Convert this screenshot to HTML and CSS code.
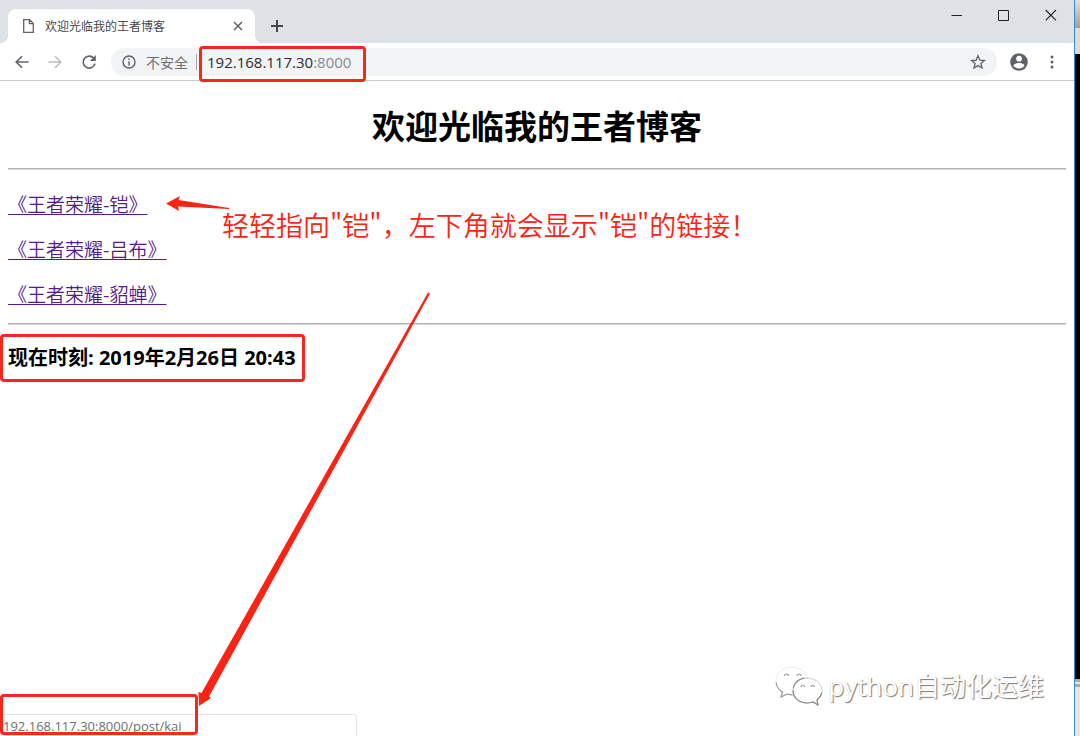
FILE: index.html
```html
<!DOCTYPE html>
<html lang="zh-CN">
<head>
<meta charset="utf-8">
<title>欢迎光临我的王者博客</title>
<link rel="stylesheet" href="styles.css">
</head>
<body>
<div class="desktop">
  <div class="window">
    <header class="tab-strip">
      <div class="tab">
        <svg class="tab-file" width="11" height="14" viewBox="0 0 11 14" fill="none" stroke="#5f6368" stroke-width="1.3"><path d="M.7.7H6.6L10.3 4.4V13.3H.7ZM6.4.9V4.7H10.2"/></svg>
        <span class="tab-title">欢迎光临我的王者博客</span>
        <button class="icon-button" aria-label="关闭标签页"><svg width="10" height="10" viewBox="0 0 10 10" stroke="#5f6368" stroke-width="1.5"><path d="M1 1L9 9M9 1L1 9"/></svg></button>
      </div>
      <button class="icon-button new-tab" aria-label="新标签页"><svg width="12" height="12" viewBox="0 0 12 12" stroke="#45484c" stroke-width="2"><path d="M6 0V12M0 6H12"/></svg></button>
      <div class="window-controls">
        <button class="icon-button" aria-label="最小化"><svg width="12" height="12" viewBox="0 0 12 12" stroke="#222" stroke-width="1"><path d="M.5 6.5H11"/></svg></button>
        <button class="icon-button" aria-label="最大化"><svg width="12" height="12" viewBox="0 0 12 12" fill="none" stroke="#222" stroke-width="1"><path d="M.5 1.5H10.5V11.5H.5Z"/></svg></button>
        <button class="icon-button" aria-label="关闭"><svg width="12" height="12" viewBox="0 0 12 12" stroke="#222" stroke-width="1.1"><path d="M.7 1L11 11.3M11 1L.7 11.3"/></svg></button>
      </div>
    </header>
    <nav class="toolbar">
      <div class="nav-buttons">
        <button class="icon-button" aria-label="后退"><svg width="14" height="14" viewBox="0 0 14 14" fill="none" stroke="#5f6368" stroke-width="1.6"><path d="M13.5 7H1.5M7 1.2L1.2 7L7 12.8"/></svg></button>
        <button class="icon-button" aria-label="前进" disabled><svg width="14" height="14" viewBox="0 0 14 14" fill="none" stroke="#babcbe" stroke-width="1.5"><path d="M.5 7H12.5M7 1.2L12.8 7L7 12.8"/></svg></button>
        <button class="icon-button" aria-label="重新加载"><svg width="16" height="16" viewBox="0 0 16 16"><path d="M12.8 4.2A6 6 0 1 0 14 9.6" fill="none" stroke="#5f6368" stroke-width="1.7"/><path d="M14.8 1V7H8.8Z" fill="#5f6368"/></svg></button>
      </div>
      <div class="address-bar">
        <svg width="14" height="14" viewBox="0 0 14 14" fill="none" stroke="#5f6368" stroke-width="1.4"><circle cx="7" cy="7" r="6"/><path d="M7 6.2V10.4M7 3.6V5"/></svg>
        <span class="security">不安全</span>
        <span class="divider"></span>
        <span class="url">192.168.117.30<span class="port">:8000</span></span>
        <button class="icon-button bookmark" aria-label="为此页添加书签"><svg width="16" height="16" viewBox="0 0 16 16" fill="none" stroke="#5f6368" stroke-width="1.3"><path d="M8 1.8L9.8 6.1L14.4 6.5L10.9 9.5L12 14L8 11.6L4 14L5.1 9.5L1.6 6.5L6.2 6.1Z"/></svg></button>
      </div>
      <button class="icon-button" aria-label="用户"><svg width="18" height="18" viewBox="0 0 18 18"><circle cx="9" cy="9" r="8.8" fill="#5f6368"/><circle cx="9" cy="5.7" r="2.9" fill="#fff"/><path d="M3.4 12.4C4.6 10.6 7 10 9 10S13.4 10.6 14.6 12.4C13.3 14.4 11.3 15.4 9 15.4S4.7 14.4 3.4 12.4Z" fill="#fff"/></svg></button>
      <button class="icon-button" aria-label="菜单"><svg width="4" height="14" viewBox="0 0 4 14" fill="#5f6368"><circle cx="2" cy="2" r="1.5"/><circle cx="2" cy="7" r="1.5"/><circle cx="2" cy="12" r="1.5"/></svg></button>
    </nav>
    <main class="page">
      <h1 class="page-title">欢迎光临我的王者博客</h1>
      <hr class="rule">
      <div class="posts">
        <a class="post-link" href="#kai">《王者荣耀-铠》</a>
        <a class="post-link" href="#lvbu">《王者荣耀-吕布》</a>
        <a class="post-link" href="#diaochan">《王者荣耀-貂蝉》</a>
      </div>
      <hr class="rule">
      <p class="clock">现在时刻: 2019年2月26日 20:43</p>
      <p class="note">轻轻指向"铠"，左下角就会显示"铠"的链接！</p>
      <svg class="arrow-short" width="64" height="18" viewBox="0 0 64 18" fill="#fb2313"><path d="M0 8.5L14 1L12.5 5L63 13V14L12 11.5L13 16Z"/></svg>
      <div class="status">192.168.117.30:8000/post/kai</div>
      <svg class="arrow-long" width="234" height="416" viewBox="0 0 234 416" fill="#fb2313"><path d="M232 .5L234 1.5L13 404.5L15 406L3 414L2.5 400L5.500 401Z"/></svg>
      <div class="watermark">
        <svg width="48" height="40" viewBox="0 0 48 40" fill="#fff" stroke-linecap="round">
          <path d="M17 1C8 1 1 7 1 15C1 20 3.5 23.5 7.5 26L6 31L12 28C14 28.6 17 29 20 28.5L33 14C32 6 25 1 17 1Z" stroke="#ececec"/>
          <path d="M1.2 17C1.8 21 4 24 7.5 26L6 31L12 28L17 28.8" fill="none" stroke="#999" stroke-width="1.2"/>
          <path d="M32 12C24 12 18 17.5 18 24.5S24 37 32 37C34 37 36 36.6 38 36L43 39L42 34C45 32 47 28.5 47 24.5C47 17.5 40 12 32 12Z" stroke="#ccc"/>
          <path d="M18 24.5C18 31.5 24 37 32 37C34 37 36 36.6 38 36L43 39L42 34C44 32.5 46 30 46.7 27M18.3 22C19 17 23.5 13 29 12.2" fill="none" stroke="#888" stroke-width="1.2"/>
          <path d="M9.5 9.5C10 7.5 13 7.5 13.5 9.5M22 9.5C22.5 7.5 25.5 7.5 26 9.5M26 20.5C26.5 18.8 29 18.8 29.5 20.5M36 20.5C36.5 18.8 39 18.8 39.5 20.5" fill="none" stroke="#999" stroke-width="1.2"/>
        </svg>
        <span>python自动化运维</span>
      </div>
    </main>
  </div>
  <aside class="behind"><div class="behind-top"></div><div class="behind-panel"></div><div class="behind-dark"></div><div class="behind-foot"></div></aside>
</div>
</body>
</html>
```
FILE: styles.css
```css
*, *::before, *::after { box-sizing: border-box; }
body {
  margin: 0;
  font-family: "Open Sans", "Noto Sans CJK SC", sans-serif;
  color: #000;
  background: #fff;
}
.desktop { display: flex; min-height: 100vh; overflow: hidden; }
.window { flex: 1; min-width: 0; display: flex; flex-direction: column; }

.icon-button {
  display: flex;
  align-items: center;
  justify-content: center;
  padding: 0;
  border: 0;
  background: none;
}

.tab-strip { display: flex; height: 43px; padding-left: 8px; background: #dee1e6; }
.tab {
  position: relative;
  display: flex;
  align-items: center;
  width: 247px;
  margin-top: 9px;
  padding: 0 12px 0 15px;
  border-radius: 8px 8px 0 0;
  background: #fff;
}
.tab::before, .tab::after {
  content: "";
  position: absolute;
  bottom: 0;
  width: 8px;
  height: 8px;
}
.tab::before { right: 100%; background: radial-gradient(circle at 0 0, transparent 8px, #fff 8px); }
.tab::after { left: 100%; background: radial-gradient(circle at 100% 0, transparent 8px, #fff 8px); }
.tab-title { flex: 1; margin-left: 11px; font-size: 12px; color: #45484c; }
.new-tab { width: 44px; margin-top: 8px; }
.window-controls { display: flex; height: 30px; margin-left: auto; }
.window-controls .icon-button { width: 47px; }

.toolbar {
  display: flex;
  align-items: center;
  gap: 22px;
  height: 38px;
  padding: 0 20px 0 15px;
  border-bottom: 1px solid #c9cbcd;
  background: #fff;
}
.nav-buttons { display: flex; gap: 19px; }
.address-bar {
  flex: 1;
  display: flex;
  align-items: center;
  height: 28px;
  margin: 0 -9px 0 -8px;
  padding: 0 11px;
  border-radius: 14px;
  background: #f1f3f4;
}
.security { margin-left: 10px; font-size: 14px; color: #6b6f73; }
.divider { width: 1px; height: 16px; margin: 0 10px 0 8px; background: #a5a8ab; }
.url { position: relative; font-size: 15px; color: #2b2d30; }
.port { color: #888b8f; }
.bookmark { margin-left: auto; }

.url::after, .clock::after, .status::after {
  content: "";
  position: absolute;
  border: 3px solid #f6281c;
  border-radius: 4px;
}
.url::after { inset: -6px -15px -10px -8px; }

.page { position: relative; flex: 1; padding: 24px 8px; }
.page-title { margin: 0 0 19px; font-size: 33px; line-height: 44px; text-align: center; }
.rule { margin: 0; border: 0; border-top: 1px solid #b0b0b0; border-bottom: 1px solid #d8d8d8; }
.posts { display: flex; flex-direction: column; align-items: flex-start; gap: 20px; padding: 21px 0 17px; }
.post-link {
  font-family: "Noto Sans CJK SC", sans-serif;
  font-size: 19px;
  font-weight: 350;
  line-height: 25px;
  color: #551a8b;
  text-underline-offset: 2px;
}
.clock { position: relative; width: max-content; margin: 20px 0 0; font-size: 20px; font-weight: 700; line-height: 25px; }
.clock::after { inset: -11px -9px -12px -8px; }

.note {
  position: absolute;
  left: 222px;
  top: 124px;
  margin: 0;
  font-family: "Noto Sans CJK SC", sans-serif;
  font-size: 27px;
  font-weight: 350;
  line-height: 40px;
  white-space: nowrap;
  color: #fb2313;
}
.arrow-short { position: absolute; left: 166px; top: 114px; }
.arrow-long { position: absolute; left: 196px; top: 211px; }
.status {
  position: absolute;
  left: 0;
  bottom: 0;
  width: 357px;
  height: 22px;
  padding: 2px 3px;
  border: 1px solid #e3e3e3;
  border-width: 1px 1px 0 0;
  border-radius: 0 4px 0 0;
  font-size: 13px;
  line-height: 18px;
  color: #6b6f73;
}
.status::after { left: 0; bottom: 1px; width: 198px; height: 41px; }
.watermark {
  position: absolute;
  right: 30px;
  bottom: 30px;
  display: flex;
  align-items: center;
  gap: 5px;
  font-size: 26px;
  line-height: 40px;
  color: #fff;
  text-shadow: 1px 1px 1px #777, 0 0 1px #ccc;
}

.behind { display: flex; flex-direction: column; width: 6px; border-left: 1px solid #3b8bc9; }
.behind-top { height: 28px; background: linear-gradient(#e4dfdb, #a39d99); }
.behind-panel { height: 26px; background: #e0d9d5; }
.behind-dark { flex: 1; background: #000; }
.behind-foot { height: 57px; border-top: 8px double #aaa; background: #e9e4e1; }
```
